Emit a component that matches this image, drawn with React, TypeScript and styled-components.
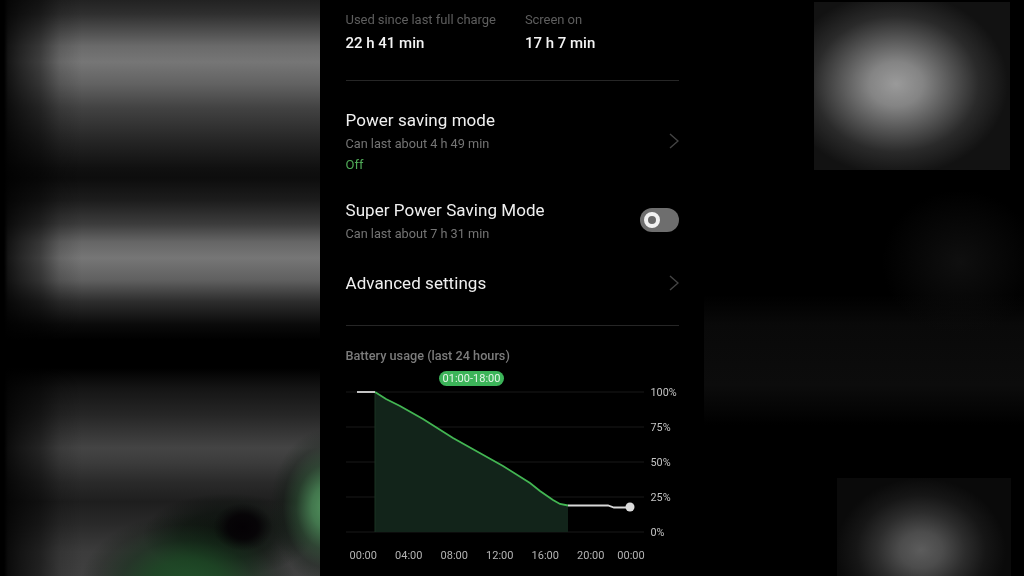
import * as React from 'react';
import styled, {createGlobalStyle} from 'styled-components';

const GlobalStyle = createGlobalStyle`
  html, body {
    margin: 0;
    background: #000;
  }
`;

const App = () => {
  return (
    <Page>
      <GlobalStyle />
      <LeftBackdrop />
      <Phone>
        <Stats>
          <Stat>
            <StatLabel>Used since last full charge</StatLabel>
            <StatValue>22 h 41 min</StatValue>
          </Stat>
          <Stat>
            <StatLabel>Screen on</StatLabel>
            <StatValue>17 h 7 min</StatValue>
          </Stat>
        </Stats>
        <Divider $top={27} />

        <Row $top={28}>
          <div>
            <RowTitle>Power saving mode</RowTitle>
            <RowSub>Can last about 4 h 49 min</RowSub>
            <RowStatus>Off</RowStatus>
          </div>
          <Chevron lift={2} />
        </Row>
        <Row $top={25}>
          <div>
            <RowTitle>Super Power Saving Mode</RowTitle>
            <RowSub>Can last about 7 h 31 min</RowSub>
          </div>
          <Toggle>
            <Knob />
          </Toggle>
        </Row>
        <Row $top={29}>
          <RowTitle>Advanced settings</RowTitle>
          <Chevron />
        </Row>
        <Divider $top={31} />

        <ChartTitle>Battery usage (last 24 hours)</ChartTitle>
        <Pill>01:00-18:00</Pill>
        <ChartRow>
          <BatteryChart />
          <YAxis>
            {['100%', '75%', '50%', '25%', '0%'].map((label) => (
              <YLabel key={label}>{label}</YLabel>
            ))}
          </YAxis>
        </ChartRow>
        <XAxis>
          {['00:00', '04:00', '08:00', '12:00', '16:00', '20:00', '00:00'].map((label, i) => (
            <XLabel key={i}>{label}</XLabel>
          ))}
        </XAxis>
      </Phone>
      <RightBackdrop />
    </Page>
  );
};

export default App;

const Chevron = ({lift = 0}: {lift?: number}) => (
  <ChevronIcon $lift={lift} width="10" height="16" viewBox="0 0 10 16">
    <polyline points="1,1 9,8 1,15" />
  </ChevronIcon>
);

const GREEN_LINE =
  '29,6 40,13 54,20 77,33 107,52 132,66 157,80 184,97 194,105 207,114 214,118 222,119.5';

const BatteryChart = () => {
  const gridY = [6, 41, 76, 111, 146];
  return (
    <svg width="298" height="150" viewBox="0 0 298 150">
      {gridY.map((y) => (
        <line key={y} x1="0" y1={y} x2="298" y2={y} stroke="#181818" strokeWidth="1" />
      ))}
      <polygon points={`${GREEN_LINE} 222,146 29,146`} fill="#12241a" />
      <line x1="29" y1="6" x2="29" y2="146" stroke="#1a3322" strokeWidth="1" />
      <polyline points={GREEN_LINE} fill="none" stroke="#43b653" strokeWidth="1.8" />
      <polyline points="11,6 29,6" fill="none" stroke="#d8d8d8" strokeWidth="1.8" />
      <polyline
        points="222,119.5 262,119.5 268,121.5 284,121.5"
        fill="none"
        stroke="#d8d8d8"
        strokeWidth="1.8"
      />
      <circle cx="284" cy="121" r="4.5" fill="#dcdcdc" />
    </svg>
  );
};

const Page = styled.div`
  width: 1024px;
  height: 576px;
  display: flex;
  overflow: hidden;
  background: #000;
  font-family: Roboto, 'Liberation Sans', sans-serif;
`;

const LeftBackdrop = styled.div`
  width: 320px;
  flex: none;
  background:
    linear-gradient(to right, #000 0, #000 4px, rgba(0, 0, 0, 0.82) 8px, rgba(0, 0, 0, 0.68) 20px, rgba(0, 0, 0, 0.48) 40px, rgba(0, 0, 0, 0.14) 60px, rgba(0, 0, 0, 0) 82px),
    radial-gradient(ellipse 30px 24px at 243px 527px, rgba(4, 0, 4, 0.95) 0, rgba(4, 0, 4, 0.8) 50%, rgba(4, 0, 4, 0.3) 78%, rgba(0, 0, 0, 0) 100%),
    radial-gradient(ellipse 58px 78px at 328px 507px, rgba(84, 150, 96, 1) 0, rgba(70, 128, 82, 0.9) 28%, rgba(40, 78, 48, 0.55) 55%, rgba(14, 28, 18, 0.3) 78%, rgba(0, 0, 0, 0) 100%),
    radial-gradient(ellipse 108px 72px at 188px 585px, rgba(30, 80, 40, 0.95) 0, rgba(26, 70, 34, 0.85) 35%, rgba(18, 46, 24, 0.55) 62%, rgba(10, 24, 12, 0.22) 84%, rgba(0, 0, 0, 0) 100%),
    radial-gradient(ellipse 85px 42px at 228px 535px, rgba(4, 12, 6, 0.8) 0, rgba(4, 12, 6, 0.55) 55%, rgba(0, 0, 0, 0) 100%),
    linear-gradient(
      to bottom,
      #222 0,
      #2f2f2f 14px,
      #4c4c4c 30px,
      #6a6a6a 46px,
      #767676 62px,
      #626262 84px,
      #424242 108px,
      #262626 140px,
      #101010 168px,
      #0d0d0d 178px,
      #1c1c1c 200px,
      #3c3c3c 224px,
      #666 242px,
      #767676 258px,
      #606060 280px,
      #2c2c2c 302px,
      #0a0a0a 325px,
      #000 340px,
      #000 368px,
      #141414 388px,
      #262626 415px,
      #444 448px,
      #3c3c3c 462px,
      #2a2a2a 482px,
      #1e1e1e 502px,
      #2a2a2a 525px,
      #3c3c3c 552px,
      #404040 576px
    );
`;

const RightBackdrop = styled.div`
  width: 320px;
  flex: none;
  background:
    radial-gradient(ellipse 112px 92px at 82px 82px, #9a9a9a 0, #848484 24%, #4c4c4c 55%, #2a2a2a 74%, #121212 100%) 110px 2px / 196px 168px no-repeat,
    radial-gradient(ellipse 85px 72px at 84px 72px, #5c5c5c 0, #4c4c4c 25%, #2c2c2c 52%, #161616 76%, #0a0a0a 100%) 133px 478px / 174px 98px no-repeat,
    radial-gradient(ellipse 78px 72px at 256px 262px, #0f0f0f, rgba(0, 0, 0, 0) 100%),
    linear-gradient(to bottom, #000 295px, #090909 325px, #0c0c0c 385px, #000 425px);
`;

const Phone = styled.main`
  width: 384px;
  flex: none;
  box-sizing: border-box;
  padding: 12px 25px 0 25.5px;
  background: #000;
  display: flex;
  flex-direction: column;
  filter: blur(0.3px);
`;

const Stats = styled.section`
  display: flex;
  gap: 29px;
`;

const Stat = styled.div`
  display: flex;
  flex-direction: column;
  gap: 5px;
`;

const StatLabel = styled.div`
  font-size: 13px;
  line-height: 16px;
  letter-spacing: -0.05px;
  color: #5e5e5e;
`;

const StatValue = styled.div`
  font-size: 15px;
  line-height: 20px;
  font-weight: 500;
  color: #f4f4f4;
`;

const Divider = styled.hr<{$top: number}>`
  margin: ${(p) => p.$top}px 0 0;
  border: 0;
  height: 1px;
  flex: none;
  background: #262626;
`;

const Row = styled.div<{$top: number}>`
  margin-top: ${(p) => p.$top}px;
  display: flex;
  align-items: center;
  justify-content: space-between;
`;

const RowTitle = styled.div`
  font-size: 17px;
  line-height: 22px;
  letter-spacing: 0.05px;
  color: #f0f0f0;
`;

const RowSub = styled.div`
  margin-top: 4px;
  font-size: 12.7px;
  line-height: 18px;
  color: #757575;
`;

const RowStatus = styled.div`
  margin-top: 3px;
  font-size: 13px;
  line-height: 18px;
  color: #50aa58;
`;

const ChevronIcon = styled.svg<{$lift: number}>`
  flex: none;
  margin-bottom: ${(p) => p.$lift}px;
  fill: none;
  stroke: #444;
  stroke-width: 1.4;
`;

const Toggle = styled.div`
  width: 39px;
  height: 24px;
  flex: none;
  box-sizing: border-box;
  margin-bottom: 3px;
  padding-left: 4px;
  border-radius: 12px;
  background: #6e6e6e;
  display: flex;
  align-items: center;
`;

const Knob = styled.div`
  width: 16px;
  height: 16px;
  box-sizing: border-box;
  border: 4px solid #f2f2f2;
  border-radius: 50%;
  background: #6a6a6a;
`;

const ChartTitle = styled.h2`
  margin: 21px 0 0;
  font-size: 12.7px;
  line-height: 18px;
  font-weight: 500;
  color: #7c7c7c;
`;

const Pill = styled.div`
  margin: 6px 0 0 93.5px;
  width: 65px;
  height: 15px;
  border-radius: 8px;
  background: #3cb459;
  color: #e6f5e9;
  font-size: 11px;
  line-height: 15px;
  text-align: center;
`;

const ChartRow = styled.div`
  display: flex;
  gap: 7px;
  height: 150px;
`;

const YAxis = styled.div`
  margin-top: 1px;
  display: flex;
  flex-direction: column;
  gap: 23px;
`;

const YLabel = styled.div`
  font-size: 10.8px;
  line-height: 12px;
  color: #c4c4c4;
`;

const XAxis = styled.div`
  margin: 13px 0 0 -5px;
  display: grid;
  grid-template-columns: repeat(6, 45.5px) 35px;
`;

const XLabel = styled.div`
  font-size: 11px;
  line-height: 14px;
  text-align: center;
  color: #b4b4b4;
`;
